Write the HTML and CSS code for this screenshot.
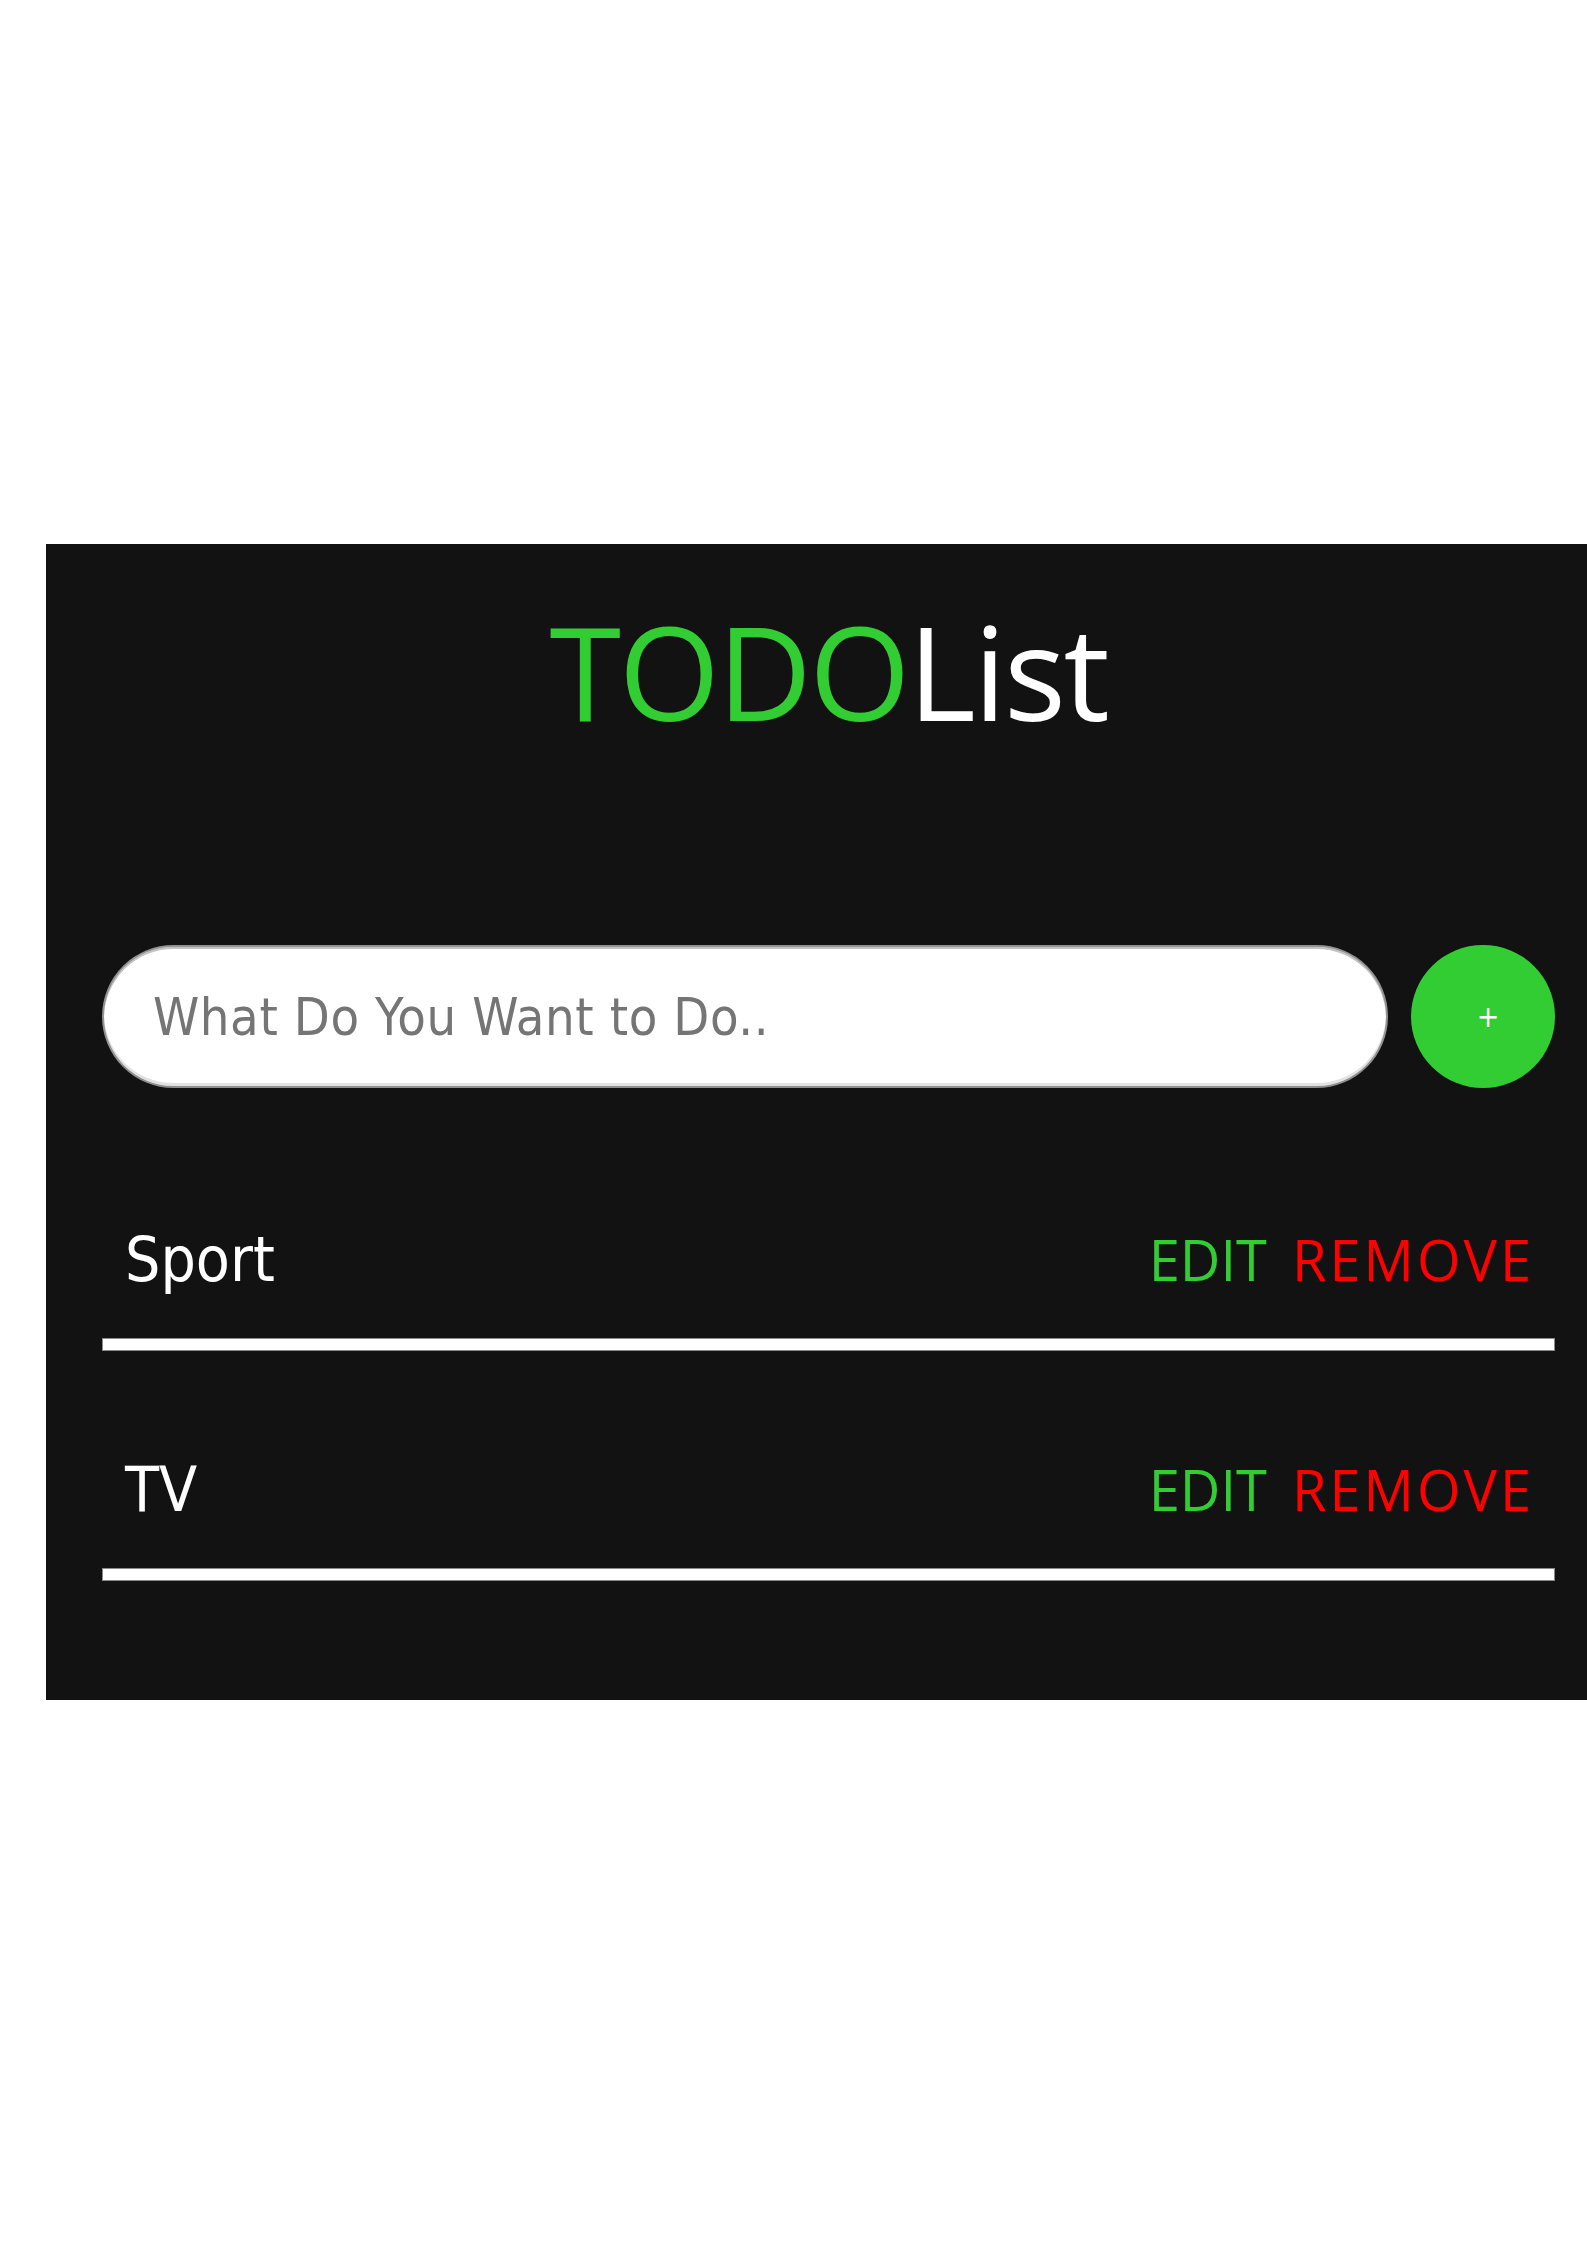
FILE: index.html
```html
<!DOCTYPE html>
<html lang="en">
<head>
<meta charset="utf-8">
<title>TODOList</title>
<link rel="stylesheet" href="styles.css">
</head>
<body>
  <main class="panel">
    <h1 class="title"><span class="title-accent">TODO</span>List</h1>
    <form class="add-row">
      <input class="add-input" type="text" placeholder="What Do You Want to Do..">
      <button class="add-btn" type="button">+</button>
    </form>
    <ul class="todo-list">
      <li class="todo-item">
        <div class="todo-row">
          <span class="todo-text">Sport</span>
          <span class="todo-actions">
            <button class="act act-edit" type="button">EDIT</button>
            <button class="act act-remove" type="button">REMOVE</button>
          </span>
        </div>
        <div class="todo-rule"></div>
      </li>
      <li class="todo-item">
        <div class="todo-row">
          <span class="todo-text">TV</span>
          <span class="todo-actions">
            <button class="act act-edit" type="button">EDIT</button>
            <button class="act act-remove" type="button">REMOVE</button>
          </span>
        </div>
        <div class="todo-rule"></div>
      </li>
    </ul>
  </main>
</body>
</html>
```

FILE: styles.css
```css
html, body {
  overflow-x: hidden;
}

body {
  margin: 0;
  background: #ffffff;
  min-height: 2245px;
}

.panel {
  box-sizing: border-box;
  margin: 544px 0 0 46px;
  width: 1565px;
  height: 1156px;
  padding: 38px 56px 0 56px;
  background: #121212;
}

.title {
  margin: 0;
  text-align: center;
  font-family: "Open Sans", sans-serif;
  font-weight: 400;
  font-size: 130px;
  letter-spacing: -2.4px;
  line-height: normal;
  color: #ffffff;
}

.title-accent {
  color: #32cd32;
}

.add-row {
  display: flex;
  align-items: center;
  gap: 23px;
  margin: 186px 0 0 0;
}

.add-input {
  box-sizing: border-box;
  flex: 1;
  min-width: 0;
  height: 143px;
  margin: 0;
  padding: 0 20px 0 49px;
  border: 2px solid #939393;
  border-bottom-color: #8e8e8e;
  border-radius: 72px;
  box-shadow: inset 0 2px 0 #c4c4c4, inset 0 -3px 0 #e2e2e2;
  background: #ffffff;
  font-family: "DejaVu Sans Condensed", "DejaVu Sans", sans-serif;
  font-stretch: semi-condensed;
  font-size: 52px;
  letter-spacing: 0.6px;
  color: #222;
  outline: none;
}

.add-input::placeholder {
  color: #757575;
}

.add-btn {
  box-sizing: border-box;
  flex: none;
  width: 144px;
  height: 143px;
  margin: 0;
  padding: 0 0 0 10px;
  border: none;
  border-radius: 50%;
  background: #32cd32;
  color: #ffffff;
  font-family: "DejaVu Sans Condensed", "DejaVu Sans", sans-serif;
  font-stretch: semi-condensed;
  font-size: 30px;
  line-height: 1;
}

.todo-list {
  list-style: none;
  margin: 33px 0 0 0;
  padding: 0;
}

.todo-row {
  display: flex;
  justify-content: space-between;
  align-items: baseline;
  padding: 102px 21px 42px 23px;
  line-height: 72px;
}

.todo-text {
  font-family: "DejaVu Sans Condensed", "DejaVu Sans", sans-serif;
  font-stretch: semi-condensed;
  font-size: 62px;
  color: #ffffff;
}

.todo-actions {
  display: flex;
  align-items: baseline;
  gap: 25px;
}

.act {
  margin: 0;
  padding: 0;
  border: none;
  background: none;
  font-family: "Open Sans", sans-serif;
  font-size: 56px;
  line-height: 72px;
}

.act-edit {
  color: #32cd32;
}

.act-remove {
  color: #ff0000;
  letter-spacing: 3px;
}

.todo-rule {
  height: 11px;
  background: #ffffff;
  border: 1px solid #8a8a8a;
}
```
